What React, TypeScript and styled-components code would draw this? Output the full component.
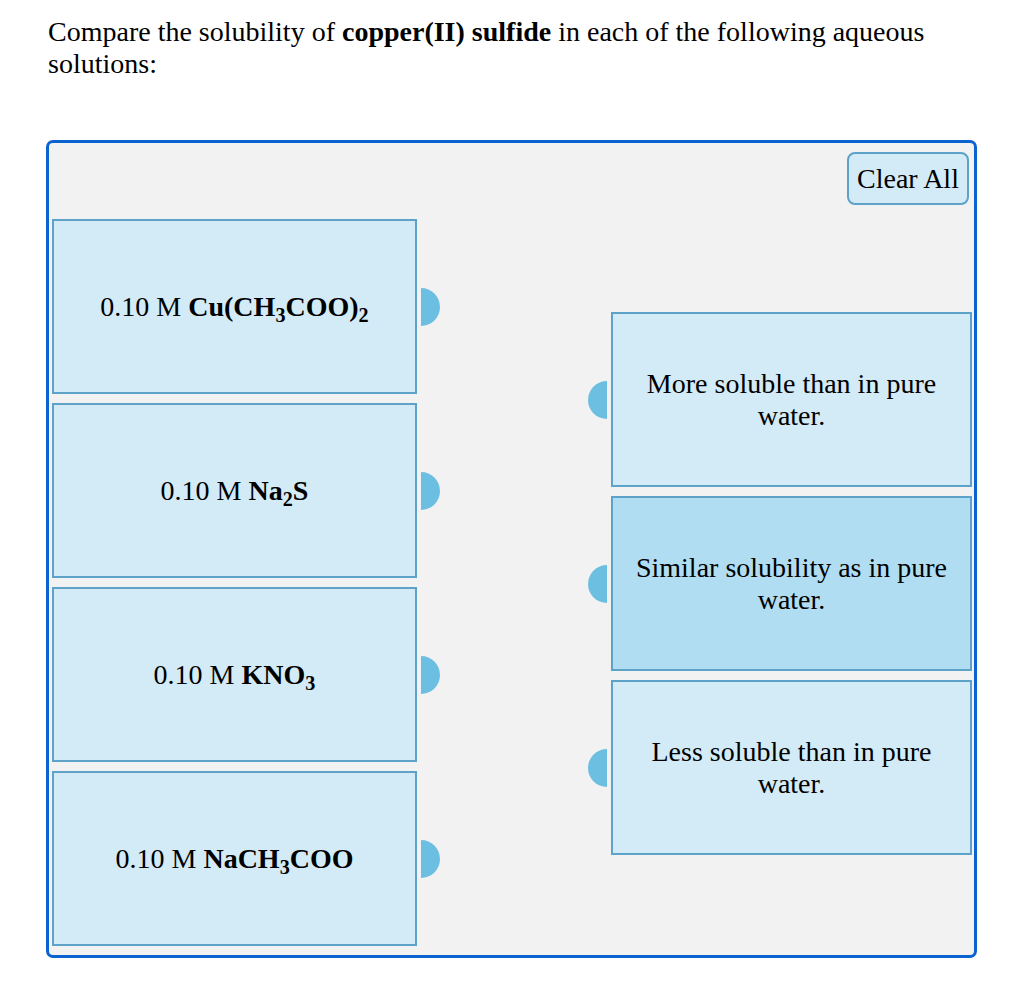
import styled, { createGlobalStyle } from 'styled-components'

const GlobalStyle = createGlobalStyle`
  body {
    margin: 8px;
    background: #fff;
    font-family: "Liberation Serif", "Times New Roman", serif;
    color: #000;
  }
`

const Page = styled.div`
  padding: 8px 0 0 38px;
  width: 931px;
`

const Prompt = styled.p`
  margin: 0 0 60px 2px;
  font-size: 28px;
  line-height: 32px;
`

const Board = styled.div`
  box-sizing: border-box;
  width: 931px;
  border: 3px solid #0b63d1;
  border-radius: 7px;
  background: #f2f2f2;
  padding: 9px 2px 9px 3px;
`

const Toolbar = styled.div`
  display: flex;
  justify-content: flex-end;
  padding-right: 3px;
`

const ClearButton = styled.button`
  box-sizing: border-box;
  width: 122px;
  height: 53px;
  border: 2px solid #5ca2c9;
  border-radius: 8px;
  background: #d3ebf7;
  font-family: inherit;
  font-size: 28px;
  color: #000;
  padding: 0;
  cursor: pointer;
`

const Columns = styled.div`
  display: flex;
  justify-content: space-between;
  align-items: flex-start;
  margin-top: 14px;
`

const Column = styled.div<{ $offset: number }>`
  display: flex;
  flex-direction: column;
  gap: 9px;
  padding-top: ${({ $offset }) => $offset}px;
`

const Row = styled.div<{ $side: 'left' | 'right' }>`
  display: flex;
  flex-direction: ${({ $side }) => ($side === 'left' ? 'row' : 'row-reverse')};
  align-items: center;
  gap: 4px;
`

const Card = styled.div<{ $width: number; $active?: boolean }>`
  box-sizing: border-box;
  width: ${({ $width }) => $width}px;
  height: 175px;
  border: 2px solid #5ca2c9;
  background: ${({ $active }) => ($active ? '#b1ddf3' : '#d3ebf7')};
  display: flex;
  align-items: center;
  justify-content: center;
  text-align: center;
  padding: 0 20px;
  font-size: 28px;
  line-height: 32px;
`

const Handle = styled.div<{ $side: 'left' | 'right' }>`
  width: 19px;
  height: 38px;
  background: #6cbfe1;
  border-radius: ${({ $side }) => ($side === 'left' ? '0 19px 19px 0' : '19px 0 0 19px')};
`

const Sub = styled.sub`
  font-size: 0.72em;
  vertical-align: -0.3em;
  line-height: 0;
`

const solutions = [
  <>0.10 M <b>Cu(CH<Sub>3</Sub>COO)<Sub>2</Sub></b></>,
  <>0.10 M <b>Na<Sub>2</Sub>S</b></>,
  <>0.10 M <b>KNO<Sub>3</Sub></b></>,
  <>0.10 M <b>NaCH<Sub>3</Sub>COO</b></>,
]

const answers = [
  { text: 'More soluble than in pure water.', active: false },
  { text: 'Similar solubility as in pure water.', active: true },
  { text: 'Less soluble than in pure water.', active: false },
]

export default function App() {
  return (
    <>
      <GlobalStyle />
      <Page>
        <Prompt>
          Compare the solubility of <b>copper(II) sulfide</b> in each of the following aqueous solutions:
        </Prompt>
        <Board>
          <Toolbar>
            <ClearButton>Clear All</ClearButton>
          </Toolbar>
          <Columns>
            <Column $offset={0}>
              {solutions.map((s, i) => (
                <Row key={i} $side="left">
                  <Card $width={365}>
                    <span>{s}</span>
                  </Card>
                  <Handle $side="left" />
                </Row>
              ))}
            </Column>
            <Column $offset={93}>
              {answers.map((a, i) => (
                <Row key={i} $side="right">
                  <Card $width={361} $active={a.active}>
                    <span>{a.text}</span>
                  </Card>
                  <Handle $side="right" />
                </Row>
              ))}
            </Column>
          </Columns>
        </Board>
      </Page>
    </>
  )
}
